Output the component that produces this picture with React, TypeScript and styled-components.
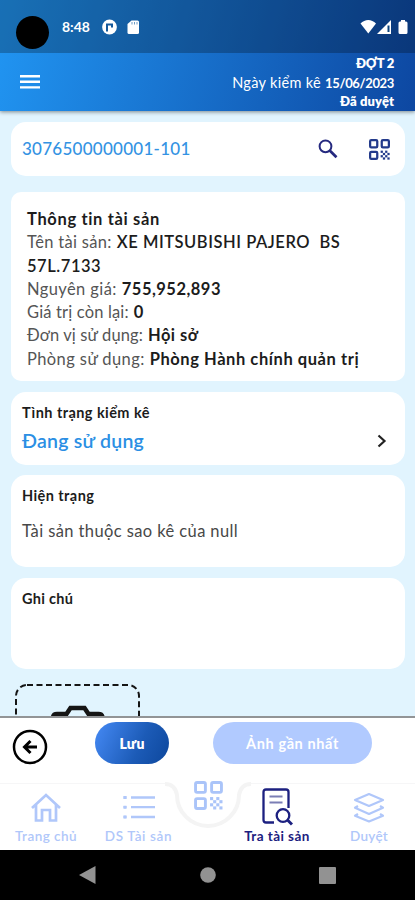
import React from "react";
import styled, { createGlobalStyle } from "styled-components";

const Global = createGlobalStyle`
  * { box-sizing: border-box; }
  body { margin: 0; background: #e1f3fd; font-family: Lato, "Noto Sans", sans-serif; }
`;

const Screen = styled.div`
  width: 415px;
  height: 900px;
  display: flex;
  flex-direction: column;
  overflow: hidden;
  background: #e1f4fe;
`;

const Top = styled.header`
  flex: none;
  height: 111px;
  color: #fff;
  background: linear-gradient(105deg, #2196f3 0%, #0d47a1 100%);
  box-shadow: 0 1px 4px rgba(0, 0, 0, 0.45);
`;

const StatusBar = styled.div`
  height: 53px;
  display: flex;
  align-items: center;
  padding: 2px 7px 0 16px;
  background: rgba(0, 0, 0, 0.25);
`;

const CameraHole = styled.div`
  width: 33px;
  height: 33px;
  margin: 9px 13px 0 0;
  border-radius: 50%;
  background: #000;
`;

const Clock = styled.div`
  width: 29px;
  margin-top: -2px;
  font-size: 14px;
  font-weight: 700;
`;

const StatusIcons = styled.div`
  display: flex;
  align-items: center;
  margin: -2px 0 0 auto;
`;

const AppBar = styled.div`
  height: 58px;
  display: flex;
  align-items: center;
  justify-content: space-between;
  padding: 0 21px 0 20px;
`;

const Session = styled.div`
  display: flex;
  flex-direction: column;
  align-items: flex-end;
`;

const Text = styled.span<{ $size?: number; $weight?: number; $track?: number; $color?: string; $line?: number }>`
  font-size: ${(p) => p.$size ?? 16.5}px;
  font-weight: ${(p) => p.$weight ?? 400};
  letter-spacing: ${(p) => p.$track ?? 0}px;
  color: ${(p) => p.$color ?? "inherit"};
  line-height: ${(p) => (p.$line ? `${p.$line}px` : "inherit")};
  white-space: pre;
`;

const Content = styled.main`
  flex: none;
  height: 605px;
  padding: 11px 10px 0 11px;
  overflow: hidden;
`;

const Card = styled.section<{ $height: number; $gap?: number }>`
  height: ${(p) => p.$height}px;
  margin-bottom: ${(p) => p.$gap ?? 11}px;
  padding: 0 11px;
  border-radius: 15px;
  background: #fff;
  color: #1c1c1c;
`;

const SearchCard = styled(Card)`
  display: flex;
  align-items: center;
  padding-right: 15px;
`;

const SearchActions = styled.div`
  display: flex;
  align-items: center;
  gap: 31px;
  margin-left: auto;
`;

const InfoCard = styled(Card)`
  padding: 16px 16px 0;
  border-radius: 10px;
`;

const InfoLine = styled.div`
  display: flex;
  gap: 5px;
  line-height: 23.3px;
  white-space: pre;
`;

const FieldCard = styled(Card)`
  display: flex;
  flex-direction: column;
  padding-top: 10px;
`;

const FieldRow = styled.div`
  display: flex;
  align-items: center;
  justify-content: space-between;
  padding-right: 7px;
`;

const PhotoBox = styled.div`
  width: 125px;
  height: 125px;
  margin: 15px 0 0 4px;
`;

const Actions = styled.div`
  flex: none;
  height: 67px;
  display: flex;
  align-items: flex-start;
  padding: 4px 43px 0 12px;
  border-top: 2px solid #929496;
  background: #fff;
`;

const BackButton = styled.button`
  width: 36px;
  height: 36px;
  margin: 7px 47px 0 0;
  padding: 0;
  border: 0;
  background: none;
`;

const Pill = styled.button<{ $width: number; $muted?: boolean }>`
  width: ${(p) => p.$width}px;
  height: 42px;
  padding: 0;
  border: 0;
  border-radius: 21px;
  color: #fff;
  font-family: inherit;
  background: ${(p) => (p.$muted ? "#b1caff" : "linear-gradient(115deg, #4286f0 5%, #1c5bb7 60%, #0d479c 100%)")};
  & + & { margin-left: auto; }
`;

const Nav = styled.nav`
  position: relative;
  flex: none;
  height: 67px;
  display: grid;
  grid-template-columns: 92px 93px 46px 92px 92px;
  background: #fff;
  border-top: 1px solid #f6f6f7;
`;

const NavItem = styled.div<{ $active?: boolean }>`
  display: flex;
  flex-direction: column;
  align-items: center;
  padding-top: 4px;
  color: ${(p) => (p.$active ? "#1c2080" : "#b0c7fa")};
`;

const Notch = styled.div`
  position: absolute;
  left: 164px;
  top: -18px;
  width: 88px;
  height: 66px;
`;

const ScanSlot = styled.div``;

const SystemBar = styled.footer`
  flex: none;
  height: 50px;
  display: flex;
  align-items: center;
  justify-content: space-between;
  padding: 0 79px;
  background: #000;
`;

const QrIcon = ({ size, color, stroke }: { size: number; color: string; stroke: number }) => (
  <svg width={size} height={size} viewBox="0 0 28 28" fill={color}>
    <g fill="none" stroke={color} strokeWidth={stroke}>
      <rect x="1.5" y="1.5" width="9.5" height="9.5" rx="1.5" />
      <rect x="17" y="1.5" width="9.5" height="9.5" rx="1.5" />
      <rect x="1.5" y="17" width="9.5" height="9.5" rx="1.5" />
    </g>
    {[[15.5, 15.5], [21.5, 15.5], [18.5, 18.5], [24.5, 18.5], [15.5, 21.5], [21.5, 21.5], [18.5, 24.5], [24.5, 24.5]].map(([x, y]) => (
      <rect key={`${x}-${y}`} x={x} y={y} width="3" height="3" />
    ))}
  </svg>
);

const info = [
  { label: "Tên tài sản:", lt: 0.31, value: "XE MITSUBISHI PAJERO  BS", vt: 0.54, w: 600 },
  { label: "", lt: 0, value: "57L.7133", vt: 0.55, w: 600 },
  { label: "Nguyên giá:", lt: 0.4, value: "755,952,893", vt: 0.48, w: 700 },
  { label: "Giá trị còn lại:", lt: 0.16, value: "0", vt: 0, w: 700 },
  { label: "Đơn vị sử dụng:", lt: 0.13, value: "Hội sở", vt: 0.45, w: 700 },
  { label: "Phòng sử dụng:", lt: 0.4, value: "Phòng Hành chính quản trị", vt: 0.56, w: 700 },
];

export default function App() {
  return (
    <Screen>
      <Global />
      <Top>
        <StatusBar>
          <CameraHole />
          <Clock>8:48</Clock>
          <svg width="52" height="18" viewBox="0 0 52 18">
            <circle cx="18.5" cy="8" r="7.4" fill="#fff" />
            <path d="M16 12.5V5.5h5v3" fill="none" stroke="#14599c" strokeWidth="2" />
            <path d="M40.5 1.5h6a1.5 1.5 0 0 1 1.5 1.5v10.5a1.5 1.5 0 0 1-1.5 1.5h-8.5a1.5 1.5 0 0 1-1.5-1.5V5z" fill="#fff" />
            <path d="M41 3v2.5M43.5 3v2.5M46 3v2.5" stroke="#6d9bc5" strokeWidth="1" />
          </svg>
          <StatusIcons>
            <svg width="48" height="16" viewBox="0 0 48 16" fill="#fff">
              <path d="M0.5 4.5C5-.2 11.5-.2 16 4.5L8.3 14.5z" />
              <path d="M31 1v14H17z" />
              <path d="M28.5 6.5v6.5" stroke="#0b427c" strokeWidth="2" />
              <path d="M41 1h4v1.5h1q1.5 0 1.5 1.5v9.5q0 1.5-1.5 1.5h-6q-1.5 0-1.5-1.5V4q0-1.5 1.5-1.5h1z" />
            </svg>
          </StatusIcons>
        </StatusBar>
        <AppBar>
          <svg width="20" height="14" viewBox="0 0 20 14" fill="#fff">
            <path d="M0 0h20v2.4H0zM0 5.6h20V8H0zM0 11.2h20v2.4H0z" />
          </svg>
          <Session>
            <Text $size={13} $weight={800} $track={-0.3} $line={19}>ĐỢT 2</Text>
            <Text $size={14.5} $track={0.32} $line={19}>
              Ngày kiểm kê <Text $size={13} $weight={700} $track={-0.35}>15/06/2023</Text>
            </Text>
            <Text $size={13} $weight={800} $track={0.1} $line={17}>Đã duyệt</Text>
          </Session>
        </AppBar>
      </Top>

      <Content>
        <SearchCard $height={54} $gap={16}>
          <Text $size={17} $weight={500} $track={0.26} $color="#3493e3" $line={20}>3076500000001-101</Text>
          <SearchActions>
            <svg width="21" height="21" viewBox="0 0 21 21" fill="none" stroke="#25297f" strokeWidth="2">
              <circle cx="8.5" cy="7.3" r="5.9" />
              <path d="M12.7 11.5l6.8 6.8" strokeWidth="2.7" />
            </svg>
            <QrIcon size={21} color="#233a8b" stroke={3} />
          </SearchActions>
        </SearchCard>

        <InfoCard $height={189}>
          <InfoLine><Text $weight={700} $track={0.65}>Thông tin tài sản</Text></InfoLine>
          {info.map((r) => (
            <InfoLine key={r.value}>
              {r.label && <Text $track={r.lt} $color="#555">{r.label}</Text>}
              <Text $weight={r.w} $track={r.vt}>{r.value}</Text>
            </InfoLine>
          ))}
        </InfoCard>

        <FieldCard $height={73} $gap={10}>
          <Text $size={14.5} $weight={700} $track={0.43} $line={22}>Tình trạng kiểm kê</Text>
          <FieldRow>
            <Text $size={19.5} $weight={600} $track={0.25} $color="#2b8fe4" $line={33}>Đang sử dụng</Text>
            <svg width="10" height="14" viewBox="0 0 10 14" fill="none" stroke="#222" strokeWidth="2.2">
              <path d="M1.5 1.5L7.5 7l-6 5.5" />
            </svg>
          </FieldRow>
        </FieldCard>

        <FieldCard $height={92}>
          <Text $size={14.5} $weight={700} $track={0.42} $line={22}>Hiện trạng</Text>
          <Text $track={0.4} $color="#484848" $line={48}>Tài sản thuộc sao kê của null</Text>
        </FieldCard>

        <FieldCard $height={91} $gap={0}>
          <Text $size={14.5} $weight={700} $track={0.3} $line={22}>Ghi chú</Text>
        </FieldCard>

        <PhotoBox>
          <svg width="125" height="125" viewBox="0 0 125 125" fill="none" stroke="#151515">
            <rect x="1" y="1" width="123" height="123" rx="11" strokeWidth="2" strokeDasharray="6 3.5" />
            <path d="M38 52V34q0-4 4-4h9.5l4-6h14l4 6h10q4 0 4 4v18z" strokeWidth="4.5" />
          </svg>
        </PhotoBox>
      </Content>

      <Actions>
        <BackButton aria-label="Quay lại">
          <svg width="36" height="36" viewBox="0 0 36 36" fill="none" stroke="#000">
            <circle cx="18" cy="18" r="16" strokeWidth="2.5" />
            <path d="M25 18H13M18.5 12l-6 6 6 6" strokeWidth="3" />
          </svg>
        </BackButton>
        <Pill $width={74}><Text $size={14} $weight={800} $track={0.13}>Lưu</Text></Pill>
        <Pill $width={159} $muted><Text $size={14.5} $weight={700} $track={0.6}>Ảnh gần nhất</Text></Pill>
      </Actions>

      <Nav>
        <Notch>
          <svg width="88" height="66" viewBox="0 0 88 66">
            <path d="M6 17h76v4H6z" fill="#fff" />
            <path d="M1 18q10 0 12 11a31 31 0 0 0 62 0q2-11 12-11" fill="#fff" stroke="#f4f4f4" strokeWidth="4" />
            <circle cx="44" cy="29" r="28" fill="#fff" />
            <g transform="translate(30 15)"><QrIcon size={29} color="#aac4f9" stroke={2.8} /></g>
          </svg>
        </Notch>
        <NavItem>
          <svg width="32" height="38" viewBox="0 0 32 38" fill="none" stroke="currentColor" strokeWidth="2.7">
            <path d="M2 20L16 7l14 13M6 17v15.5h6V22h8v10.5h6V17" />
          </svg>
          <Text $size={13.5} $weight={600} $track={0.45} $line={20}>Trang chủ</Text>
        </NavItem>
        <NavItem>
          <svg width="34" height="38" viewBox="0 0 34 38" fill="none" stroke="currentColor" strokeWidth="2.3">
            <path d="M9 9.5h24M9 19.2h24M9 29h24M1.5 9.5h3M1.5 19.2h3M1.5 29h3" />
            <path d="M3 8v3M3 17.7v3M3 27.5v3" strokeWidth="3" />
          </svg>
          <Text $size={13.5} $weight={600} $track={0.63} $line={20}>DS Tài sản</Text>
        </NavItem>
        <ScanSlot />
        <NavItem $active>
          <svg width="32" height="38" viewBox="0 0 32 38" fill="none" stroke="currentColor" strokeWidth="2.3">
            <path d="M13 34.5H5q-2.5 0-2.5-2.5V4Q2.5 1.5 5 1.5h20q2.5 0 2.5 2.5v16" />
            <path d="M8.500 8.5h13M8.5 14.5h13" strokeWidth="1.8" stroke="#7b7eb5" />
            <circle cx="22" cy="27.5" r="6.3" />
            <path d="M26.5 32l4.5 4.5" strokeWidth="3" />
          </svg>
          <Text $size={13.5} $weight={700} $track={0.45} $line={20}>Tra tài sản</Text>
        </NavItem>
        <NavItem>
          <svg width="32" height="38" viewBox="0 0 32 38" fill="none" stroke="currentColor" strokeWidth="2.2" strokeLinejoin="round">
            <path d="M16 6l14 6-14 6-14-6z" />
            <path d="M5 18l-3 1.8L16 26l14-6.2L27 18M5 26l-3 1.8L16 33.5l14-5.7L27 26" />
          </svg>
          <Text $size={13.5} $weight={600} $track={0.3} $line={20}>Duyệt</Text>
        </NavItem>
      </Nav>

      <SystemBar>
        <svg width="17" height="18" viewBox="0 0 17 18" fill="#929292"><path d="M16.5 0v18L0 9z" /></svg>
        <svg width="16" height="16" viewBox="0 0 16 16" fill="#929292"><circle cx="8" cy="8" r="7.8" /></svg>
        <svg width="17" height="17" viewBox="0 0 17 17" fill="#929292"><rect width="17" height="17" rx="1" /></svg>
      </SystemBar>
    </Screen>
  );
}
